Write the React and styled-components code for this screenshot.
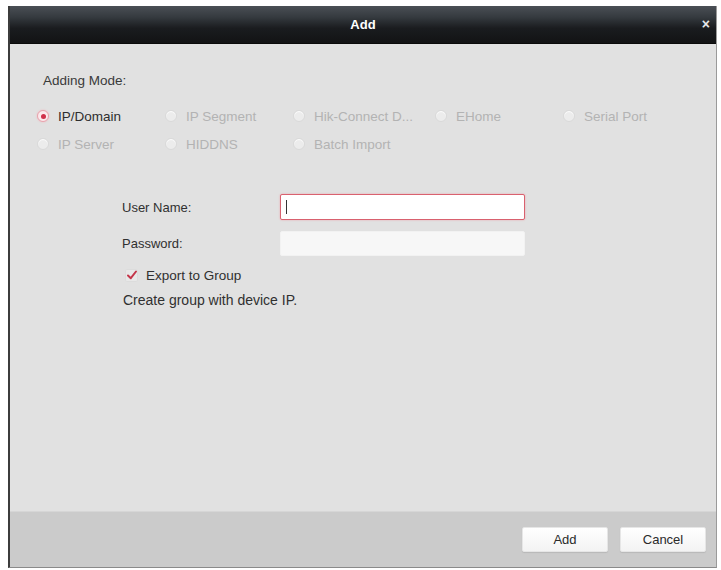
import React from "react";
import styled, { createGlobalStyle } from "styled-components";

const GlobalStyle = createGlobalStyle`
  html, body {
    margin: 0;
    padding: 0;
    background: #ffffff;
    font-family: "Liberation Sans", Arial, sans-serif;
  }
`;

const MODES = [
  { label: "IP/Domain", checked: true },
  { label: "IP Segment" },
  { label: "Hik-Connect D..." },
  { label: "EHome" },
  { label: "Serial Port" },
  { label: "IP Server" },
  { label: "HIDDNS" },
  { label: "Batch Import" },
];

function Radio({ checked }) {
  return (
    <RadioCircle $checked={checked}>{checked && <RadioDot />}</RadioCircle>
  );
}

function App() {
  return (
    <>
      <GlobalStyle />
      <Dialog>
        <TitleBar>
          <Title>Add</Title>
          <CloseButton>×</CloseButton>
        </TitleBar>

        <Body>
          <ModeLabel>Adding Mode:</ModeLabel>
          <ModeGrid>
            {MODES.map((m) => (
              <ModeOption key={m.label}>
                <Radio checked={m.checked} />
                <ModeText $active={m.checked}>{m.label}</ModeText>
              </ModeOption>
            ))}
          </ModeGrid>

          <Form>
            <FieldLabel>User Name:</FieldLabel>
            <TextInput $focused>
              <Caret />
            </TextInput>
            <FieldLabel>Password:</FieldLabel>
            <TextInput />
          </Form>

          <CheckRow>
            <CheckBox>
              <svg width="12" height="12" viewBox="0 0 12 12">
                <path
                  d="M2 6.5 L4.8 9.2 L10 2.5"
                  fill="none"
                  stroke="#c4364a"
                  strokeWidth="2"
                  strokeLinecap="round"
                  strokeLinejoin="round"
                />
              </svg>
            </CheckBox>
            <CheckText>Export to Group</CheckText>
          </CheckRow>
          <Hint>Create group with device IP.</Hint>
        </Body>

        <Footer>
          <Button>Add</Button>
          <Button>Cancel</Button>
        </Footer>
      </Dialog>
    </>
  );
}

const Dialog = styled.div`
  display: flex;
  flex-direction: column;
  width: 709px;
  height: 562px;
  margin: 6px 0 0 8px;
  box-sizing: border-box;
  border-left: 2px solid #3c3c3c;
  border-right: 1px solid #9a9a9a;
  border-bottom: 1px solid #8a8a8a;
  background: #e1e1e1;
`;

const TitleBar = styled.div`
  position: relative;
  display: flex;
  align-items: center;
  justify-content: center;
  height: 37px;
  flex-shrink: 0;
  background: linear-gradient(#4a4f55 0%, #353a3f 30%, #1a1c1f 60%, #121314 100%);
  border-bottom: 1px solid #0a0a0a;
`;

const Title = styled.div`
  color: #ffffff;
  font-size: 13px;
  font-weight: bold;
`;

const CloseButton = styled.div`
  position: absolute;
  right: 6px;
  top: 10px;
  color: #e8e8e8;
  font-size: 14px;
  font-weight: bold;
  line-height: 16px;
`;

const Body = styled.div`
  flex: 1;
  padding: 29px 0 0 27px;
`;

const ModeLabel = styled.div`
  font-size: 13.5px;
  color: #3a3a3a;
  margin-left: 6px;
  line-height: 16px;
`;

const ModeGrid = styled.div`
  display: grid;
  grid-template-columns: 128px 128px 142px 128px auto;
  grid-auto-rows: 28px;
  margin-top: 13px;
`;

const ModeOption = styled.div`
  display: flex;
  align-items: center;
  gap: 9px;
`;

const RadioCircle = styled.div`
  display: flex;
  align-items: center;
  justify-content: center;
  width: 12px;
  height: 12px;
  border-radius: 50%;
  box-sizing: border-box;
  background: ${(p) => (p.$checked ? "#fbe9ec" : "#ececec")};
  border: 1px solid ${(p) => (p.$checked ? "#e7a3ad" : "#d9d9d9")};
  box-shadow: ${(p) => (p.$checked ? "0 0 2px #f0b5bd" : "inset 0 1px 1px #ffffff")};
`;

const RadioDot = styled.div`
  width: 5px;
  height: 5px;
  border-radius: 50%;
  background: #d0304a;
`;

const ModeText = styled.span`
  font-size: 13.5px;
  color: ${(p) => (p.$active ? "#2e2e2e" : "#b3b3b3")};
`;

const Form = styled.div`
  display: grid;
  grid-template-columns: 158px 245px;
  grid-auto-rows: 26px;
  row-gap: 10px;
  align-items: center;
  margin: 36px 0 0 85px;
`;

const FieldLabel = styled.div`
  font-size: 13px;
  color: #303030;
`;

const TextInput = styled.div`
  display: flex;
  align-items: center;
  height: ${(p) => (p.$focused ? "26px" : "25px")};
  box-sizing: border-box;
  padding-left: 5px;
  background: ${(p) => (p.$focused ? "#ffffff" : "#f7f7f7")};
  border: 1px solid ${(p) => (p.$focused ? "#d9616f" : "#f2f2f2")};
  border-radius: 2px;
  box-shadow: ${(p) => (p.$focused ? "0 0 2px #eba0a8" : "none")};
`;

const Caret = styled.div`
  width: 1px;
  height: 14px;
  background: #333333;
`;

const CheckRow = styled.div`
  display: flex;
  align-items: center;
  gap: 8px;
  margin: 8px 0 0 88px;
  height: 22px;
`;

const CheckBox = styled.div`
  display: flex;
  align-items: center;
  justify-content: center;
  width: 13px;
  height: 13px;
  border-radius: 2px;
  background: #e8e8e8;
  box-shadow: inset 0 0 0 1px #dcdcdc;
`;

const CheckText = styled.span`
  font-size: 13.5px;
  color: #303030;
`;

const Hint = styled.div`
  font-size: 14px;
  color: #303030;
  margin: 6px 0 0 86px;
`;

const Footer = styled.div`
  display: flex;
  justify-content: flex-end;
  align-items: center;
  gap: 12px;
  height: 56px;
  flex-shrink: 0;
  padding-right: 10px;
  box-sizing: border-box;
  background: #cbcbcb;
  border-top: 1px solid #d6d6d6;
`;

const Button = styled.div`
  display: flex;
  align-items: center;
  justify-content: center;
  width: 86px;
  height: 25px;
  box-sizing: border-box;
  background: linear-gradient(#ffffff, #f3f3f3);
  border: 1px solid #e6e6e6;
  border-radius: 2px;
  font-size: 13px;
  color: #2a2a2a;
  box-shadow: 0 1px 1px #b8b8b8;
`;

export default App;
